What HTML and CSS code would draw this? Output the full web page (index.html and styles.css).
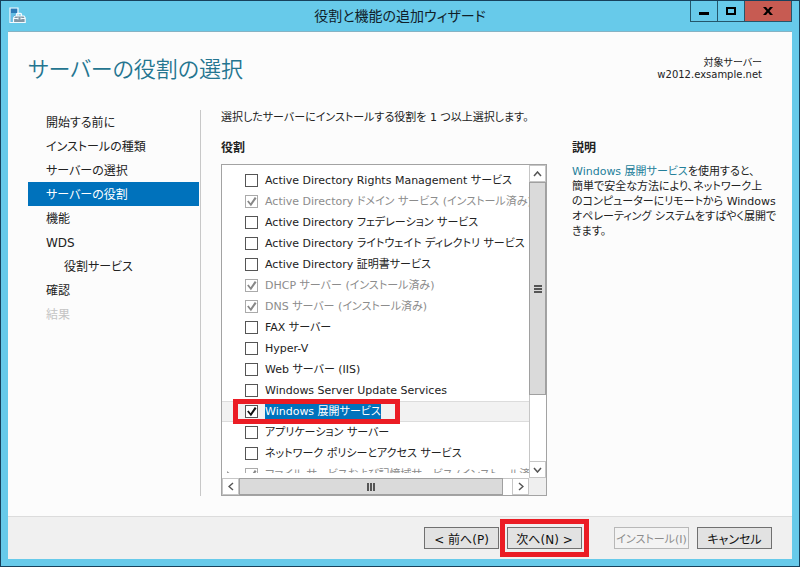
FILE: index.html
```html
<!DOCTYPE html>
<html lang="ja">
<head>
<meta charset="utf-8">
<meta name="viewport" content="width=device-width, initial-scale=1">
<title>役割と機能の追加ウィザード</title>
<link rel="stylesheet" href="styles.css">
</head>
<body>
<div class="window">
  <header class="titlebar">
    <svg class="app-icon" width="17" height="17" viewBox="0 0 17 17" aria-hidden="true">
      <path d="M1 1h8v14.500H1z" fill="#3d8fc9" stroke="#f4fbff" stroke-width="1.200"/>
      <path d="M2 5h6M2 3h6" stroke="#1c67a5"/>
      <path d="M2 6h6v2H5v7H2z" fill="#62bde4"/>
      <path d="M7.500 9V7.500q0-1 1-1h3q1 0 1 1V9" fill="none" stroke="#f4fbff" stroke-width="1.300"/>
      <path d="M4.500 11 6 9h9l1.200 2v4.500H4.500z" fill="#8297a5" stroke="#f4fbff" stroke-width="1.200"/>
      <path d="M5 11.500h4m3 0h4M9 10.500v2m3-2v2" stroke="#f4fbff"/>
    </svg>
    <h1 class="caption">役割と機能の追加ウィザード</h1>
    <div class="window-buttons">
      <button type="button" class="win-btn" aria-label="最小化"><svg width="10" height="10" viewBox="0 0 10 10"><path d="M0 6h10v3H0z"/></svg></button>
      <button type="button" class="win-btn" aria-label="最大化"><svg width="10" height="8" viewBox="0 0 10 8"><path d="M1 1h8v6H1z" fill="none" stroke="#000" stroke-width="2"/></svg></button>
      <button type="button" class="win-btn close" aria-label="閉じる"><svg width="10" height="8" viewBox="0 0 10 8"><path d="M0 0h3l2 2.500L7 0h3L6.500 4 10 8H7L5 5.500 3 8H0l3.500-4z"/></svg></button>
    </div>
  </header>

  <div class="page">
    <div class="page-head">
      <h2 class="page-title">サーバーの役割の選択</h2>
      <p class="target">対象サーバー<br>w2012.exsample.net</p>
    </div>

    <main class="content">
      <nav class="steps">
        <a href="#" class="step">開始する前に</a>
        <a href="#" class="step">インストールの種類</a>
        <a href="#" class="step">サーバーの選択</a>
        <a href="#" class="step current" aria-current="step">サーバーの役割</a>
        <a href="#" class="step">機能</a>
        <a href="#" class="step">WDS</a>
        <a href="#" class="step sub">役割サービス</a>
        <a href="#" class="step">確認</a>
        <a class="step off">結果</a>
      </nav>

      <div class="work">
        <p class="lead">選択したサーバーにインストールする役割を 1 つ以上選択します。</p>
        <section class="roles">
          <h3 class="section-title">役割</h3>
          <div class="listbox">
            <div class="viewport">
              <ul class="rows">
                <li><label class="row"><input type="checkbox"><span>Active Directory Rights Management サービス</span></label></li>
                <li><label class="row"><input type="checkbox" checked disabled><span>Active Directory ドメイン サービス (インストール済み)</span></label></li>
                <li><label class="row"><input type="checkbox"><span>Active Directory フェデレーション サービス</span></label></li>
                <li><label class="row"><input type="checkbox"><span>Active Directory ライトウェイト ディレクトリ サービス</span></label></li>
                <li><label class="row"><input type="checkbox"><span>Active Directory 証明書サービス</span></label></li>
                <li><label class="row"><input type="checkbox" checked disabled><span>DHCP サーバー (インストール済み)</span></label></li>
                <li><label class="row"><input type="checkbox" checked disabled><span>DNS サーバー (インストール済み)</span></label></li>
                <li><label class="row"><input type="checkbox"><span>FAX サーバー</span></label></li>
                <li><label class="row"><input type="checkbox"><span>Hyper-V</span></label></li>
                <li><label class="row"><input type="checkbox"><span>Web サーバー (IIS)</span></label></li>
                <li><label class="row"><input type="checkbox"><span>Windows Server Update Services</span></label></li>
                <li class="selected"><label class="row"><input type="checkbox" checked><span>Windows 展開サービス</span></label></li>
                <li><label class="row"><input type="checkbox"><span>アプリケーション サーバー</span></label></li>
                <li><label class="row"><input type="checkbox"><span>ネットワーク ポリシーとアクセス サービス</span></label></li>
                <li class="parent"><label class="row"><input type="checkbox" checked disabled><span>ファイル サービスおよび記憶域サービス (インストール済み)</span></label></li>
              </ul>
            </div>
            <div class="scroll vertical">
              <button type="button" aria-label="上へ"><svg width="9" height="6" viewBox="0 0 9 6"><path d="M1 5l3.500-4L8 5"/></svg></button>
              <div class="thumb"><i class="grip"></i></div>
              <div class="track"></div>
              <button type="button" aria-label="下へ"><svg width="9" height="6" viewBox="0 0 9 6"><path d="M1 1l3.500 4L8 1"/></svg></button>
            </div>
            <div class="scroll horizontal">
              <button type="button" aria-label="左へ"><svg width="6" height="9" viewBox="0 0 6 9"><path d="M5 1L1 4.500 5 8"/></svg></button>
              <div class="thumb"><i class="grip"></i></div>
              <div class="track"></div>
              <button type="button" aria-label="右へ"><svg width="6" height="9" viewBox="0 0 6 9"><path d="M1 1l4 3.500L1 8"/></svg></button>
            </div>
            <div class="corner"></div>
          </div>
        </section>
        <section class="about">
          <h3 class="section-title">説明</h3>
          <p class="about-text"><a href="#">Windows 展開サービス</a>を使用すると、<br>簡単で安全な方法により、ネットワーク上<br>のコンピューターにリモートから Windows<br>オペレーティング システムをすばやく展開で<br>きます。</p>
        </section>
      </div>
    </main>

    <footer class="actions">
      <button type="button" class="btn">&lt; 前へ(P)</button>
      <button type="button" class="btn next">次へ(N) &gt;</button>
      <button type="button" class="btn install" disabled>インストール(I)</button>
      <button type="button" class="btn">キャンセル</button>
    </footer>
  </div>
</div>
</body>
</html>
```
FILE: styles.css
```css
*, *::before, *::after { box-sizing: border-box; }

body {
  margin: 0;
  font-family: "DejaVu Sans", "Noto Sans CJK JP", sans-serif;
  font-size: 12px;
  font-feature-settings: "palt";
  color: #222;
}

h1, h2, h3, p, ul { margin: 0; padding: 0; font-weight: 400; }
ul { list-style: none; }
a { text-decoration: none; }
button { padding: 0; font: inherit; font-feature-settings: inherit; color: #111; }

.window {
  min-height: 100vh;
  display: flex;
  flex-direction: column;
  padding: 0 7px 7px;
  border: 1px solid #17415c;
  background: #67caea;
}

/* Title bar */
.titlebar {
  height: 30px;
  display: grid;
  grid-template-columns: 1fr auto 1fr;
  align-items: start;
}
.app-icon { margin: 6px 0 0 1px; }
.caption { font-size: 14px; line-height: 30px; color: #102029; }
.window-buttons {
  justify-self: end;
  display: flex;
  border: 1px solid #24566b;
  border-top: 0;
}
.win-btn {
  width: 27px;
  height: 20px;
  display: grid;
  place-items: center;
  border: 0;
  border-right: 1px solid #24566b;
  background: none;
}
.win-btn.close { width: 46px; border-right: 0; background: #c75b52; }

/* Page */
.page {
  flex: 1;
  display: flex;
  flex-direction: column;
  border-top: 1px solid #86b3c4;
  background: #fcfcfc;
}
.page-head {
  height: 78px;
  display: flex;
  justify-content: space-between;
  align-items: start;
  padding: 20px 30px 0 20px;
}
.page-title { font-size: 22px; line-height: 36px; font-weight: 350; color: #247590; }
.target { padding-top: 5px; font-size: 10px; line-height: 12px; text-align: right; }

.content {
  flex: 1;
  display: grid;
  grid-template-columns: 173px 1fr;
  column-gap: 20px;
  padding: 0 8px 20px 20px;
}

.steps { padding-right: 1px; border-right: 1px solid #c8c8c8; }
.step {
  display: block;
  padding: 2px 0 0 18px;
  line-height: 22px;
  color: #222;
}
.step.sub { padding-left: 36px; }
.step.current { background: #0072bc; color: #fff; }
.step.off { color: #c4c4c4; }

.work {
  display: grid;
  grid-template-columns: 326px 1fr;
  grid-template-rows: auto 1fr;
  column-gap: 25px;
}
.lead { grid-column: 1 / -1; font-size: 11px; line-height: 16px; padding-bottom: 12px; }
.section-title { font-size: 12px; font-weight: 700; line-height: 20px; padding-bottom: 6px; }
.roles { display: flex; flex-direction: column; }
.about-text { font-size: 11px; line-height: 15px; }
.about-text a { color: #247f9a; }

/* Role list */
.listbox {
  flex: 1;
  display: grid;
  grid-template-columns: 1fr 17px;
  grid-template-rows: 1fr 17px;
  border: 1px solid #a3a3a3;
  background: #fff;
  font-size: 11px;
}
.viewport { height: 308px; overflow: hidden; margin-bottom: 5px; padding-top: 5px; }
.rows li { height: 21px; padding-left: 23px; border: solid transparent; border-width: 1px 0; }
.row { display: flex; align-items: center; gap: 7px; height: 19px; line-height: 19px; white-space: nowrap; }
.rows .selected { position: relative; background: #f2f2f2; border-color: #dcdcdc; }
.selected span { background: #0072bc; color: #fff; line-height: 15px; }
.selected::after {
  content: "";
  position: absolute;
  left: 11px;
  top: -3px;
  width: 167px;
  height: 25px;
  border: 5px solid #eb1c24;
  pointer-events: none;
}
.parent { position: relative; }
.parent::before {
  content: "";
  position: absolute;
  left: 5px;
  top: 6px;
  width: 5px;
  height: 8px;
  background: #999;
  clip-path: polygon(0 0, 100% 50%, 0 100%);
}

input[type="checkbox"] {
  appearance: none;
  flex: none;
  width: 13px;
  height: 13px;
  margin: 0;
  border: 1px solid #555;
  background: #fff;
}
input:checked::after {
  content: "";
  display: block;
  width: 11px;
  height: 11px;
  background: #111;
  clip-path: polygon(10% 50%, 24% 40%, 42% 65%, 80% 10%, 96% 20%, 45% 94%);
}
input[type="checkbox"]:disabled { border-color: #aaa; }
input:disabled::after { background: #888; }
input:disabled + span { color: #8c8c8c; }

/* Scroll bars */
.scroll { display: flex; background: #fff; }
.scroll button {
  flex: none;
  width: 17px;
  height: 17px;
  display: grid;
  place-items: center;
  border: 1px solid #c6c6c6;
  background: #fff;
}
.scroll svg { fill: none; stroke: #555; stroke-width: 1.500; }
.thumb { display: grid; place-items: center; border: 1px solid #a0a0a0; background: #dadada; }
.vertical { flex-direction: column; }
.vertical .thumb { flex: 213; }
.vertical .track { flex: 66; border-left: 1px solid #c6c6c6; }
.horizontal .thumb { flex: 264; }
.horizontal .track { flex: 9; border-top: 1px solid #c6c6c6; }
.grip { width: 8px; height: 8px; }
.vertical .grip { background: repeating-linear-gradient(#555 0 2px, transparent 2px 3px); }
.horizontal .grip { background: repeating-linear-gradient(90deg, #555 0 2px, transparent 2px 3px); }
.corner { background: #efefef; }

/* Footer */
.actions {
  display: flex;
  justify-content: flex-end;
  align-items: center;
  gap: 8px;
  height: 43px;
  padding-right: 20px;
  border-top: 1px solid #dcdcdc;
  background: #f0f0f0;
}
.btn {
  width: 75px;
  height: 22px;
  border: 1px solid #707070;
  background: #e2e2e2;
  white-space: nowrap;
}
.btn:disabled { border-color: #b8b8b8; background: #f3f3f3; color: #8c8c8c; }
.next { position: relative; }
.next::after {
  content: "";
  position: absolute;
  inset: -9px -8px;
  border: 5px solid #eb1c24;
  pointer-events: none;
}
.install { margin-left: 24px; font-size: 11px; }
```
